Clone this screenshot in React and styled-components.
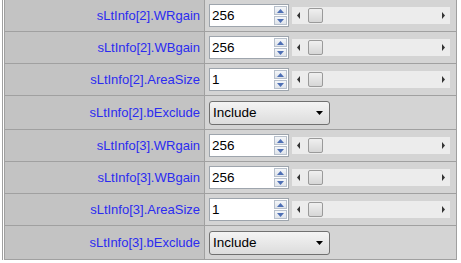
import React from 'react';
import styled, { createGlobalStyle } from 'styled-components';

const GlobalStyle = createGlobalStyle`
  html, body {
    margin: 0;
    padding: 0;
    background: #ffffff;
  }
`;

const rows = [
  { name: 'sLtInfo[2].WRgain', type: 'spin', value: '256' },
  { name: 'sLtInfo[2].WBgain', type: 'spin', value: '256' },
  { name: 'sLtInfo[2].AreaSize', type: 'spin', value: '1' },
  { name: 'sLtInfo[2].bExclude', type: 'select', value: 'Include' },
  { name: 'sLtInfo[3].WRgain', type: 'spin', value: '256' },
  { name: 'sLtInfo[3].WBgain', type: 'spin', value: '256' },
  { name: 'sLtInfo[3].AreaSize', type: 'spin', value: '1' },
  { name: 'sLtInfo[3].bExclude', type: 'select', value: 'Include' },
];

const Frame = styled.div`
  width: 461px;
  height: 263px;
  box-sizing: border-box;
  padding-left: 2px;
  overflow: hidden;
`;

const Edge = styled.div`
  border-left: 1px solid #a0a0a0;
  padding-left: 1px;
  width: 456px;
`;

const Grid = styled.div`
  display: grid;
  grid-template-columns: 199px 251px;
  gap: 1px;
  padding: 0 1px 1px 1px;
  background: #a0a0a0;
  width: fit-content;
`;

const Label = styled.div`
  background: #c3c3c3;
  height: ${p => (p.$tall ? 33 : 31)}px;
  display: flex;
  align-items: center;
  justify-content: flex-end;
  padding-right: 4px;
  font-family: "Liberation Sans", Arial, sans-serif;
  font-size: 13px;
  color: #2b2bf0;
`;

const Value = styled.div`
  background: #d4d4d4;
  height: ${p => (p.$tall ? 33 : 31)}px;
  display: flex;
  align-items: center;
  padding-left: 4px;
`;

const SpinBox = styled.div`
  width: 80px;
  height: 23px;
  box-sizing: border-box;
  border: 1px solid #9ea5ad;
  background: #fff;
  display: flex;
  align-items: center;
  justify-content: space-between;
  padding: 0 1px 0 2px;
  font-family: "Liberation Sans", Arial, sans-serif;
  font-size: 13.5px;
  color: #000;
`;

const SpinButtons = styled.div`
  display: flex;
  flex-direction: column;
  gap: 1px;
`;

const SpinButton = styled.div`
  width: 13px;
  height: 9px;
  box-sizing: border-box;
  border: 1px solid #b7c0cc;
  background: linear-gradient(#f4f6f9, #dfe4ea);
  display: flex;
  align-items: center;
  justify-content: center;
`;

const Slider = styled.div`
  margin-left: 3px;
  width: 158px;
  height: 17px;
  background: #ececec;
  display: flex;
  align-items: center;
  padding: 0 5px 0 5px;
  box-sizing: border-box;
`;

const Thumb = styled.div`
  width: 15px;
  height: 15px;
  box-sizing: border-box;
  border: 1px solid #9a9a9a;
  border-radius: 2px;
  background: linear-gradient(#f0f0f0, #d6d6d6);
  margin-left: 8px;
`;

const Spacer = styled.div`
  flex: 1;
`;

const Select = styled.div`
  width: 121px;
  height: 24px;
  box-sizing: border-box;
  border: 1px solid #707070;
  border-radius: 3px;
  background: linear-gradient(#f4f4f4, #dcdcdc);
  display: flex;
  align-items: center;
  justify-content: space-between;
  padding: 0 6px 0 3px;
  font-family: "Liberation Sans", Arial, sans-serif;
  font-size: 13.5px;
  color: #000;
`;

const Arrow = ({ dir, color, w = 7, h = 4 }) => {
  const pts = {
    up: `0,${h} ${w / 2},0 ${w},${h}`,
    down: `0,0 ${w},0 ${w / 2},${h}`,
    left: `${w},0 0,${h / 2} ${w},${h}`,
    right: `0,0 ${w},${h / 2} 0,${h}`,
  }[dir];
  return (
    <svg width={w} height={h} viewBox={`0 0 ${w} ${h}`}>
      <polygon points={pts} fill={color} />
    </svg>
  );
};

function SpinRow({ value }) {
  return (
    <>
      <SpinBox>
        <span>{value}</span>
        <SpinButtons>
          <SpinButton><Arrow dir="up" color="#4d6fb5" w={7} h={4} /></SpinButton>
          <SpinButton><Arrow dir="down" color="#4d6fb5" w={7} h={4} /></SpinButton>
        </SpinButtons>
      </SpinBox>
      <Slider>
        <Arrow dir="left" color="#333" w={3} h={7} />
        <Thumb />
        <Spacer />
        <Arrow dir="right" color="#333" w={3} h={7} />
      </Slider>
    </>
  );
}

export default function App() {
  return (
    <>
      <GlobalStyle />
      <Frame>
        <Edge>
          <Grid>
            {rows.map(r => (
              <React.Fragment key={r.name}>
                <Label $tall={r.type === 'select'}>{r.name}</Label>
                <Value $tall={r.type === 'select'}>
                  {r.type === 'spin' ? (
                    <SpinRow value={r.value} />
                  ) : (
                    <Select>
                      <span>{r.value}</span>
                      <Arrow dir="down" color="#000" w={7} h={4} />
                    </Select>
                  )}
                </Value>
              </React.Fragment>
            ))}
          </Grid>
        </Edge>
      </Frame>
    </>
  );
}
